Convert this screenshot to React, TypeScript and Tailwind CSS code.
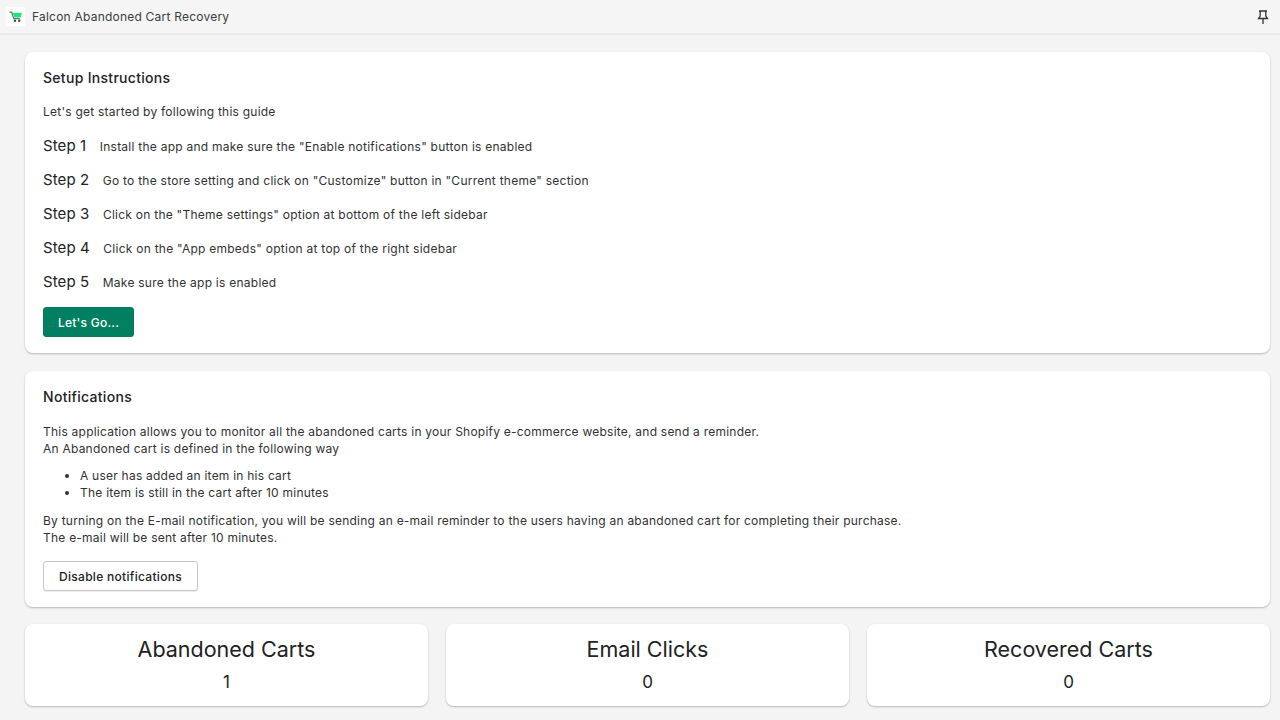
const steps = [
  { label: 'Step 1', text: 'Install the app and make sure the "Enable notifications" button is enabled' },
  { label: 'Step 2', text: 'Go to the store setting and click on "Customize" button in "Current theme" section' },
  { label: 'Step 3', text: 'Click on the "Theme settings" option at bottom of the left sidebar' },
  { label: 'Step 4', text: 'Click on the "App embeds" option at top of the right sidebar' },
  { label: 'Step 5', text: 'Make sure the app is enabled' },
]

const stats = [
  { title: 'Abandoned Carts', value: '1' },
  { title: 'Email Clicks', value: '0' },
  { title: 'Recovered Carts', value: '0' },
]

function CartLogo() {
  return (
    <div className="w-[19px] h-[19px] bg-white flex items-center justify-center">
      <svg width="14" height="14" viewBox="0 0 13 13" fill="none">
        <path d="M0.5 2h2l2 6h5.5" stroke="#4f7a66" strokeWidth="1.1" />
        <path d="M3.5 2.5h8.5l-1.2 4.5H5z" fill="#22e27a" />
        <circle cx="5.5" cy="10" r="1.1" fill="#2f4a3e" />
        <circle cx="9.5" cy="10" r="1.1" fill="#2f4a3e" />
      </svg>
    </div>
  )
}

function PinIcon() {
  return (
    <svg width="12" height="14" viewBox="0 0 12 14" fill="none" stroke="#333" strokeWidth="1.3">
      <path d="M2 1h8M3.2 1v5L1.5 8.5h9L8.8 6V1M6 8.5V14" />
    </svg>
  )
}

export default function App() {
  return (
    <div className="h-[720px] overflow-hidden bg-[#f4f4f4] text-[#202223] font-['Inter',sans-serif]">
      {/* Top bar */}
      <div className="h-[35px] flex items-center justify-between pl-[6px] pr-[11px] bg-[#f5f5f5] border-b-2 border-[#ebebeb]">
        <div className="flex items-center">
          <CartLogo />
          <span className="ml-[7px] text-[12px] tracking-[0.22px] text-[#3a3c3d]">Falcon Abandoned Cart Recovery</span>
        </div>
        <PinIcon />
      </div>

      <div className="pl-[25px] pr-[10px] pt-[17px]">
        {/* Setup */}
        <div className="h-[301px] bg-white rounded-[8px] shadow-[0_1px_2px_rgba(0,0,0,0.25)] px-[18px] pt-[17px]">
          <h2 className="text-[14px] leading-[17px] font-medium tracking-[0.3px]">Setup Instructions</h2>
          <p className="mt-[17px] text-[12px] leading-[17px] tracking-[0.23px] text-[#303233]">Let's get started by following this guide</p>
          <div className="mt-[16px] flex flex-col gap-[14px]">
            {steps.map((s) => (
              <div key={s.label} className="h-[20px] flex items-baseline">
                <span className="text-[15px] leading-[20px] tracking-[0.1px]">{s.label}</span>
                <span className="ml-[13.5px] text-[12px] tracking-[0.25px] text-[#303233]">{s.text}</span>
              </div>
            ))}
          </div>
          <button className="mt-[15px] w-[91px] h-[30px] pt-[1px] rounded-[3px] bg-[#008060] border border-[#0b7a5c] text-white text-[12px] font-medium tracking-[0.25px]">
            Let's Go...
          </button>
        </div>

        {/* Notifications */}
        <div className="mt-[18px] h-[236px] bg-white rounded-[8px] shadow-[0_1px_2px_rgba(0,0,0,0.25)] px-[18px] pt-[17px]">
          <h2 className="text-[14px] leading-[17px] font-medium tracking-[0.3px]">Notifications</h2>
          <div className="mt-[18px] text-[12px] leading-[17px] tracking-[0.23px] text-[#303233]">
            <p>This application allows you to monitor all the abandoned carts in your Shopify e-commerce website, and send a reminder.</p>
            <p>An Abandoned cart is defined in the following way</p>
            <ul className="mt-[11px] pl-[37px] list-disc leading-[16.5px]">
              <li>A user has added an item in his cart</li>
              <li>The item is still in the cart after 10 minutes</li>
            </ul>
            <p className="mt-[11px]">By turning on the E-mail notification, you will be sending an e-mail reminder to the users having an abandoned cart for completing their purchase.</p>
            <p>The e-mail will be sent after 10 minutes.</p>
          </div>
          <button className="mt-[15px] w-[155px] h-[30px] pt-[1px] rounded-[3px] bg-white border border-[#c4c6c8] shadow-[0_1px_1px_rgba(0,0,0,0.08)] text-[12px] font-medium tracking-[0.3px]">
            Disable notifications
          </button>
        </div>

        {/* Stats */}
        <div className="mt-[17px] grid grid-cols-3 gap-[18px]">
          {stats.map((s) => (
            <div key={s.title} className="h-[82px] bg-white rounded-[8px] shadow-[0_1px_2px_rgba(0,0,0,0.25)] flex flex-col items-center pt-[12px]">
              <div className="text-[21.5px] leading-[26px]">{s.title}</div>
              <div className="mt-[10px] text-[17px] leading-[20px]">{s.value}</div>
            </div>
          ))}
        </div>
      </div>
    </div>
  )
}
